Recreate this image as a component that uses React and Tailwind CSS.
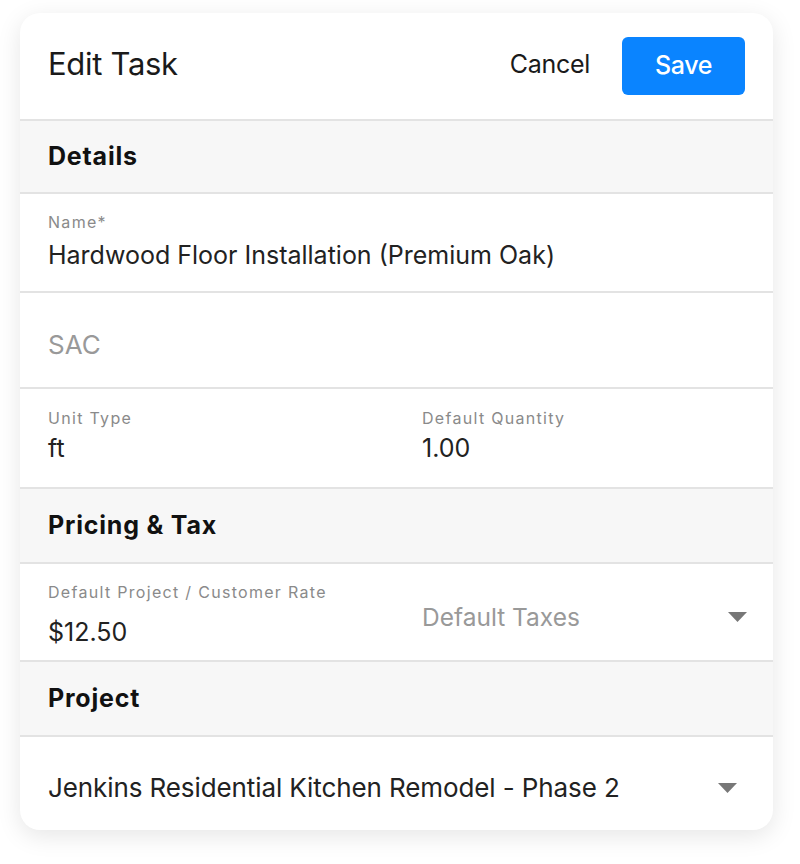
import React from 'react';

const font = { fontFamily: 'Inter, "Noto Sans", sans-serif' };

function Caret() {
  return (
    <svg width="19" height="10" viewBox="0 0 19 10" className="shrink-0">
      <path d="M0 0 H19 L9.5 10 Z" fill="#777" />
    </svg>
  );
}

function SectionHeader({ children }) {
  return (
    <div className="bg-[#f7f7f7] border-b-2 border-[#e3e3e3] px-[28px] flex items-center">
      <h2 className="text-[25px] font-bold text-[#111] tracking-[0.8px]">{children}</h2>
    </div>
  );
}

function Field({ label, value, gap = 'mt-[6px]' }) {
  return (
    <div className="flex flex-col">
      <span className="text-[16px] text-[#8a8a8a] leading-[20px] tracking-[1.3px]">{label}</span>
      <span className={`text-[25px] leading-[32px] text-[#222] ${gap}`}>{value}</span>
    </div>
  );
}

export default function App() {
  return (
    <div className="min-h-screen bg-white pt-[13px] pl-[20px]" style={font}>
      <div className="w-[753px] h-[817px] bg-white rounded-[20px] shadow-[0_6px_24px_rgba(0,0,0,0.10)] overflow-hidden grid grid-rows-[108px_73px_99px_96px_100px_75px_98px_75px_1fr]">
        <header className="flex items-center justify-between px-[28px] border-b-2 border-[#e3e3e3]">
          <h1 className="text-[31px] text-[#1a1a1a] tracking-[-0.3px] mb-[4px]">Edit Task</h1>
          <div className="flex items-center gap-[32px]">
            <button className="text-[25px] text-[#1a1a1a] tracking-[-0.3px] mb-[2px]">Cancel</button>
            <button className="w-[123px] h-[58px] rounded-[6px] bg-[#0a84ff] text-white text-[25px] font-medium tracking-[-0.4px]">Save</button>
          </div>
        </header>

        <SectionHeader>Details</SectionHeader>

        <div className="px-[28px] pt-[18px] border-b-2 border-[#e3e3e3]">
          <Field label="Name*" value="Hardwood Floor Installation (Premium Oak)" gap="mt-[7px]" />
        </div>

        <div className="px-[28px] pt-[34px] border-b-2 border-[#e3e3e3]">
          <span className="text-[26px] leading-[36px] text-[#999]">SAC</span>
        </div>

        <div className="px-[28px] pt-[19px] border-b-2 border-[#e3e3e3] grid grid-cols-[374px_1fr]">
          <Field label="Unit Type" value="ft" gap="mt-[4px]" />
          <Field label="Default Quantity" value="1.00" gap="mt-[4px]" />
        </div>

        <SectionHeader>Pricing &amp; Tax</SectionHeader>

        <div className="pl-[28px] pr-[26px] border-b-2 border-[#e3e3e3] grid grid-cols-[374px_1fr]">
          <div className="pt-[18px]">
            <Field label="Default Project / Customer Rate" value="$12.50" gap="mt-[14px]" />
          </div>
          <div className="flex items-center justify-between pt-[10px]">
            <span className="text-[24.5px] text-[#999]">Default Taxes</span>
            <Caret />
          </div>
        </div>

        <SectionHeader>Project</SectionHeader>

        <div className="pl-[28px] pr-[36px] flex items-center justify-between pt-[8px]">
          <span className="text-[26px] text-[#222] tracking-[-0.1px]">Jenkins Residential Kitchen Remodel - Phase 2</span>
          <Caret />
        </div>
      </div>
    </div>
  );
}
